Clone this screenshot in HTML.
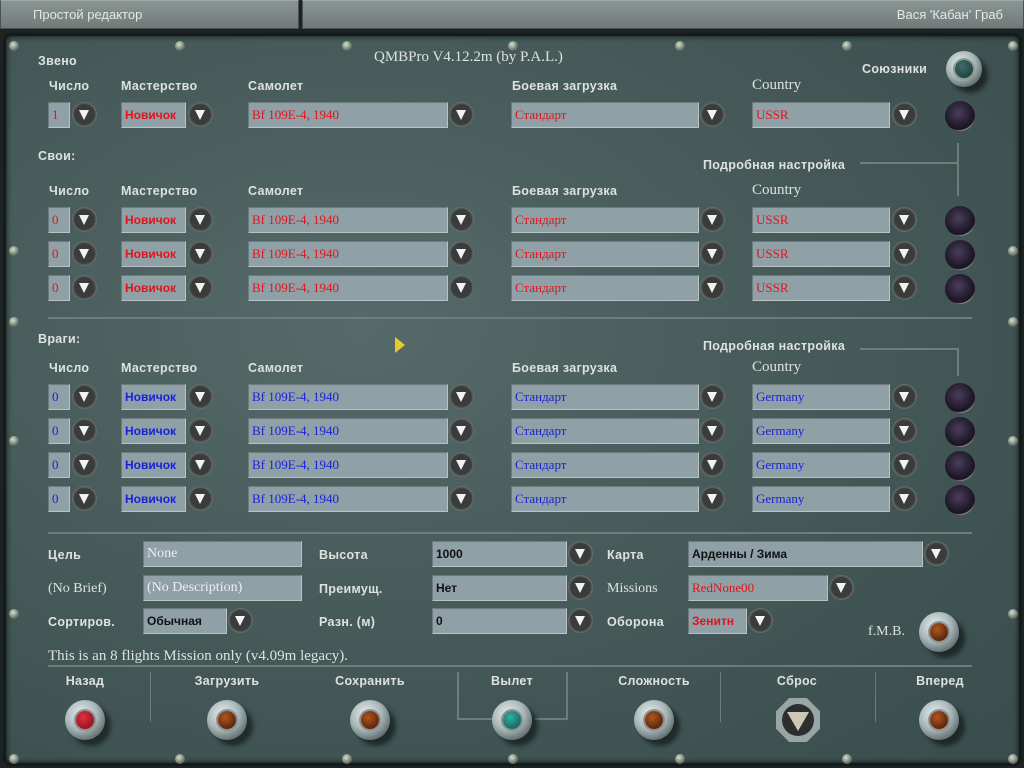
<!DOCTYPE html>
<html><head><meta charset="utf-8"><style>
*{margin:0;padding:0;box-sizing:border-box}
body{width:1024px;height:768px;overflow:hidden;background:#1d2322;position:relative;font-family:"Liberation Serif",serif;}
.tab{position:absolute;top:0;height:29px;background:linear-gradient(#8a9594,#6f7a79);border:1px solid #4a5251;border-top-color:#a0aaa9;color:#e4e8e6;font:13px "Liberation Sans",sans-serif;line-height:28px}
#panel{position:absolute;left:3px;top:33px;width:1019px;height:733px;border-radius:8px;background:radial-gradient(ellipse at 35% 40%,#566a6a 0%,#4a5e5e 35%,#405454 70%,#3a4d4d 100%);border:3px solid #151a1a;box-shadow:inset 0 0 6px #0a0f0f}
.t{position:absolute;color:#dde2de;font-size:14px;white-space:nowrap;line-height:16px}
.s{font-family:"Liberation Sans",sans-serif;font-weight:bold;font-size:12.5px;letter-spacing:.3px}
.f{position:absolute;height:26px;background:#8fa0a7;border:1px solid;border-color:#6d7a7e #b7c3c6 #b7c3c6 #6d7a7e;font:13px "Liberation Serif",serif;line-height:24px;padding-left:3px;white-space:nowrap;overflow:hidden}
.r{color:#e3141a}.b{color:#1a22d8}.k{color:#111;font-family:"Liberation Sans",sans-serif;font-weight:bold;font-size:12px}
.sb{font-family:"Liberation Sans",sans-serif;font-weight:bold;font-size:12px}
.a{position:absolute;width:25px;height:25px;border-radius:50%;background:radial-gradient(circle at 50% 50%,#3a3b3b 55%,#6d7070 70%,#2a2d2d 100%)}
.a:after{content:"";position:absolute;left:7px;top:8px;border-left:5.5px solid transparent;border-right:5.5px solid transparent;border-top:10px solid #f2f2f2}
.d{position:absolute;width:30px;height:30px;border-radius:50%;background:radial-gradient(circle at 45% 40%,#4a3f5a 0%,#221a2c 55%,#1a1420 68%,#a49aa2 74%,#5c5656 88%,#2d3232 100%)}
.sc{position:absolute;width:10px;height:10px;border-radius:50%;background:radial-gradient(circle at 40% 35%,#d8e0d0,#7e8a7c 50%,#2c3430);}
.ln{position:absolute;background:#6e7c7c}
.kn{position:absolute;width:40px;height:40px;border-radius:50%;background:radial-gradient(circle at 40% 35%,#e8eeee,#a9b6b8 45%,#6f7c7e 70%,#34403f 100%);box-shadow:6px 6px 5px rgba(0,0,0,.5)}
.kn i{position:absolute;left:11px;top:11px;width:18px;height:18px;border-radius:50%;box-shadow:0 0 0 2px #8c9090}
</style></head><body>
<div class="tab" style="left:0;width:299px;padding-left:32px">Простой редактор</div>
<div class="tab" style="left:302px;width:722px;text-align:right;padding-right:20px">Вася 'Кабан' Граб</div>
<div id="panel"></div>

<div class="sc" style="left:9px;top:41px"></div><div class="sc" style="left:175px;top:41px"></div><div class="sc" style="left:342px;top:41px"></div><div class="sc" style="left:508px;top:41px"></div><div class="sc" style="left:675px;top:41px"></div><div class="sc" style="left:842px;top:41px"></div><div class="sc" style="left:1008px;top:41px"></div>
<div class="sc" style="left:9px;top:246px"></div><div class="sc" style="left:1008px;top:246px"></div>
<div class="sc" style="left:9px;top:436px"></div><div class="sc" style="left:1008px;top:436px"></div>
<div class="sc" style="left:9px;top:609px"></div><div class="sc" style="left:1008px;top:609px"></div>
<div class="sc" style="left:9px;top:754px"></div><div class="sc" style="left:175px;top:754px"></div><div class="sc" style="left:342px;top:754px"></div><div class="sc" style="left:508px;top:754px"></div><div class="sc" style="left:675px;top:754px"></div><div class="sc" style="left:842px;top:754px"></div><div class="sc" style="left:1008px;top:754px"></div>
<div class="sc" style="left:9px;top:317px"></div><div class="sc" style="left:1008px;top:317px"></div>

<div class="t" style="left:374px;top:49px;font-size:15px">QMBPro V4.12.2m (by P.A.L.)</div>
<div class="t s" style="left:38px;top:53px">Звено</div>
<div class="t s" style="left:862px;top:61px">Союзники</div>
<div class="kn" style="left:946px;top:51px;width:36px;height:36px"><i style="left:9px;top:9px;background:radial-gradient(circle at 40% 35%,#3f6c6a,#173634);box-shadow:0 0 0 2px #8a9a90"></i></div>

<div class="t s" style="left:49px;top:78px">Число</div><div class="t s" style="left:121px;top:78px">Мастерство</div><div class="t s" style="left:248px;top:78px">Самолет</div><div class="t s" style="left:512px;top:78px">Боевая загрузка</div><div class="t" style="left:752px;top:77px;font-size:15px">Country</div>

<div class="t s" style="left:38px;top:148px">Свои:</div>
<div class="t s" style="left:703px;top:157px">Подробная настройка</div>
<div class="ln" style="left:860px;top:162px;width:98px;height:2px"></div>
<div class="ln" style="left:957px;top:143px;width:2px;height:53px"></div>
<div class="t s" style="left:49px;top:183px">Число</div><div class="t s" style="left:121px;top:183px">Мастерство</div><div class="t s" style="left:248px;top:183px">Самолет</div><div class="t s" style="left:512px;top:183px">Боевая загрузка</div><div class="t" style="left:752px;top:182px;font-size:15px">Country</div>

<div class="ln" style="left:48px;top:317px;width:924px;height:2px"></div>
<div class="t s" style="left:38px;top:331px">Враги:</div>
<div class="t s" style="left:703px;top:338px">Подробная настройка</div>
<div class="ln" style="left:860px;top:348px;width:98px;height:2px"></div>
<div class="ln" style="left:957px;top:348px;width:2px;height:28px"></div>
<div class="t s" style="left:49px;top:360px">Число</div><div class="t s" style="left:121px;top:360px">Мастерство</div><div class="t s" style="left:248px;top:360px">Самолет</div><div class="t s" style="left:512px;top:360px">Боевая загрузка</div><div class="t" style="left:752px;top:359px;font-size:15px">Country</div>

<div style="position:absolute;left:395px;top:337px;width:0;height:0;border-top:8px solid transparent;border-bottom:8px solid transparent;border-left:10px solid #e8c830"></div>

<div class="f r" style="left:48px;top:102px;width:22px">1</div><div class="a" style="left:72px;top:102px"></div><div class="f r sb" style="left:121px;top:102px;width:65px">Новичок</div><div class="a" style="left:188px;top:102px"></div><div class="f r" style="left:248px;top:102px;width:200px">Bf 109E-4, 1940</div><div class="a" style="left:449px;top:102px"></div><div class="f r" style="left:511px;top:102px;width:188px">Стандарт</div><div class="a" style="left:700px;top:102px"></div><div class="f r" style="left:752px;top:102px;width:138px">USSR</div><div class="a" style="left:892px;top:102px"></div><div class="d" style="left:945px;top:101px"></div>

<div class="f r" style="left:48px;top:207px;width:22px">0</div><div class="a" style="left:72px;top:207px"></div><div class="f r sb" style="left:121px;top:207px;width:65px">Новичок</div><div class="a" style="left:188px;top:207px"></div><div class="f r" style="left:248px;top:207px;width:200px">Bf 109E-4, 1940</div><div class="a" style="left:449px;top:207px"></div><div class="f r" style="left:511px;top:207px;width:188px">Стандарт</div><div class="a" style="left:700px;top:207px"></div><div class="f r" style="left:752px;top:207px;width:138px">USSR</div><div class="a" style="left:892px;top:207px"></div><div class="d" style="left:945px;top:206px"></div>

<div class="f r" style="left:48px;top:241px;width:22px">0</div><div class="a" style="left:72px;top:241px"></div><div class="f r sb" style="left:121px;top:241px;width:65px">Новичок</div><div class="a" style="left:188px;top:241px"></div><div class="f r" style="left:248px;top:241px;width:200px">Bf 109E-4, 1940</div><div class="a" style="left:449px;top:241px"></div><div class="f r" style="left:511px;top:241px;width:188px">Стандарт</div><div class="a" style="left:700px;top:241px"></div><div class="f r" style="left:752px;top:241px;width:138px">USSR</div><div class="a" style="left:892px;top:241px"></div><div class="d" style="left:945px;top:240px"></div>

<div class="f r" style="left:48px;top:275px;width:22px">0</div><div class="a" style="left:72px;top:275px"></div><div class="f r sb" style="left:121px;top:275px;width:65px">Новичок</div><div class="a" style="left:188px;top:275px"></div><div class="f r" style="left:248px;top:275px;width:200px">Bf 109E-4, 1940</div><div class="a" style="left:449px;top:275px"></div><div class="f r" style="left:511px;top:275px;width:188px">Стандарт</div><div class="a" style="left:700px;top:275px"></div><div class="f r" style="left:752px;top:275px;width:138px">USSR</div><div class="a" style="left:892px;top:275px"></div><div class="d" style="left:945px;top:274px"></div>

<div class="f b" style="left:48px;top:384px;width:22px">0</div><div class="a" style="left:72px;top:384px"></div><div class="f b sb" style="left:121px;top:384px;width:65px">Новичок</div><div class="a" style="left:188px;top:384px"></div><div class="f b" style="left:248px;top:384px;width:200px">Bf 109E-4, 1940</div><div class="a" style="left:449px;top:384px"></div><div class="f b" style="left:511px;top:384px;width:188px">Стандарт</div><div class="a" style="left:700px;top:384px"></div><div class="f b" style="left:752px;top:384px;width:138px">Germany</div><div class="a" style="left:892px;top:384px"></div><div class="d" style="left:945px;top:383px"></div>

<div class="f b" style="left:48px;top:418px;width:22px">0</div><div class="a" style="left:72px;top:418px"></div><div class="f b sb" style="left:121px;top:418px;width:65px">Новичок</div><div class="a" style="left:188px;top:418px"></div><div class="f b" style="left:248px;top:418px;width:200px">Bf 109E-4, 1940</div><div class="a" style="left:449px;top:418px"></div><div class="f b" style="left:511px;top:418px;width:188px">Стандарт</div><div class="a" style="left:700px;top:418px"></div><div class="f b" style="left:752px;top:418px;width:138px">Germany</div><div class="a" style="left:892px;top:418px"></div><div class="d" style="left:945px;top:417px"></div>

<div class="f b" style="left:48px;top:452px;width:22px">0</div><div class="a" style="left:72px;top:452px"></div><div class="f b sb" style="left:121px;top:452px;width:65px">Новичок</div><div class="a" style="left:188px;top:452px"></div><div class="f b" style="left:248px;top:452px;width:200px">Bf 109E-4, 1940</div><div class="a" style="left:449px;top:452px"></div><div class="f b" style="left:511px;top:452px;width:188px">Стандарт</div><div class="a" style="left:700px;top:452px"></div><div class="f b" style="left:752px;top:452px;width:138px">Germany</div><div class="a" style="left:892px;top:452px"></div><div class="d" style="left:945px;top:451px"></div>

<div class="f b" style="left:48px;top:486px;width:22px">0</div><div class="a" style="left:72px;top:486px"></div><div class="f b sb" style="left:121px;top:486px;width:65px">Новичок</div><div class="a" style="left:188px;top:486px"></div><div class="f b" style="left:248px;top:486px;width:200px">Bf 109E-4, 1940</div><div class="a" style="left:449px;top:486px"></div><div class="f b" style="left:511px;top:486px;width:188px">Стандарт</div><div class="a" style="left:700px;top:486px"></div><div class="f b" style="left:752px;top:486px;width:138px">Germany</div><div class="a" style="left:892px;top:486px"></div><div class="d" style="left:945px;top:485px"></div>

<div class="ln" style="left:48px;top:532px;width:924px;height:2px"></div>

<div class="t s" style="left:48px;top:547px">Цель</div>
<div class="f" style="left:143px;top:541px;width:159px;color:#eee;font-size:14px">None</div>
<div class="t s" style="left:319px;top:547px">Высота</div>
<div class="f k" style="left:432px;top:541px;width:135px">1000</div><div class="a" style="left:568px;top:541px"></div>
<div class="t s" style="left:607px;top:547px">Карта</div>
<div class="f k" style="left:688px;top:541px;width:235px">Арденны / Зима</div><div class="a" style="left:924px;top:541px"></div>

<div class="t" style="left:48px;top:581px">(No Brief)</div>
<div class="f" style="left:143px;top:575px;width:159px;color:#eee;font-size:14px">(No Description)</div>
<div class="t s" style="left:319px;top:581px">Преимущ.</div>
<div class="f k" style="left:432px;top:575px;width:135px">Нет</div><div class="a" style="left:568px;top:575px"></div>
<div class="t" style="left:607px;top:581px">Missions</div>
<div class="f r" style="left:688px;top:575px;width:140px">RedNone00</div><div class="a" style="left:829px;top:575px"></div>

<div class="t s" style="left:48px;top:614px">Сортиров.</div>
<div class="f k" style="left:143px;top:608px;width:84px">Обычная</div><div class="a" style="left:228px;top:608px"></div>
<div class="t s" style="left:319px;top:614px">Разн. (м)</div>
<div class="f k" style="left:432px;top:608px;width:135px">0</div><div class="a" style="left:568px;top:608px"></div>
<div class="t s" style="left:607px;top:614px">Оборона</div>
<div class="f r sb" style="left:688px;top:608px;width:59px">Зенитн</div><div class="a" style="left:748px;top:608px"></div>
<div class="t" style="left:868px;top:624px">f.M.B.</div>
<div class="kn" style="left:919px;top:612px"><i style="background:radial-gradient(circle at 40% 35%,#b0561c,#3a1408)"></i></div>

<div class="t" style="left:48px;top:648px;font-size:15px">This is an 8 flights Mission only (v4.09m legacy).</div>
<div class="ln" style="left:48px;top:665px;width:924px;height:2px"></div>

<div class="ln" style="left:150px;top:672px;width:1px;height:50px"></div>
<div class="ln" style="left:457px;top:672px;width:2px;height:47px"></div>
<div class="ln" style="left:566px;top:672px;width:2px;height:47px"></div>
<div class="ln" style="left:457px;top:718px;width:35px;height:2px"></div>
<div class="ln" style="left:535px;top:718px;width:33px;height:2px"></div>
<div class="ln" style="left:720px;top:672px;width:1px;height:50px"></div>
<div class="ln" style="left:875px;top:672px;width:1px;height:50px"></div>

<div class="t s" style="left:45px;top:673px;width:80px;text-align:center">Назад</div>
<div class="t s" style="left:187px;top:673px;width:80px;text-align:center">Загрузить</div>
<div class="t s" style="left:330px;top:673px;width:80px;text-align:center">Сохранить</div>
<div class="t s" style="left:472px;top:673px;width:80px;text-align:center">Вылет</div>
<div class="t s" style="left:614px;top:673px;width:80px;text-align:center">Сложность</div>
<div class="t s" style="left:757px;top:673px;width:80px;text-align:center">Сброс</div>
<div class="t s" style="left:900px;top:673px;width:80px;text-align:center">Вперед</div>

<div class="kn" style="left:65px;top:700px"><i style="background:radial-gradient(circle at 40% 35%,#e03040,#7a0a14)"></i></div>
<div class="kn" style="left:207px;top:700px"><i style="background:radial-gradient(circle at 40% 35%,#b0561c,#3a1408)"></i></div>
<div class="kn" style="left:350px;top:700px"><i style="background:radial-gradient(circle at 40% 35%,#b0561c,#3a1408)"></i></div>
<div class="kn" style="left:492px;top:700px"><i style="background:radial-gradient(circle at 40% 35%,#30b0a0,#0e4e46)"></i></div>
<div class="kn" style="left:634px;top:700px"><i style="background:radial-gradient(circle at 40% 35%,#b0561c,#3a1408)"></i></div>
<div style="position:absolute;left:776px;top:698px;width:44px;height:44px;background:#9aa6a6;clip-path:polygon(30% 0,70% 0,100% 30%,100% 70%,70% 100%,30% 100%,0 70%,0 30%)"></div>
<div style="position:absolute;left:782px;top:704px;width:32px;height:32px;border-radius:50%;background:#2c2f2f"></div>
<div style="position:absolute;left:787px;top:712px;border-left:11px solid transparent;border-right:11px solid transparent;border-top:19px solid #cfc6b4"></div>
<div class="kn" style="left:919px;top:700px"><i style="background:radial-gradient(circle at 40% 35%,#b0561c,#3a1408)"></i></div>
</body></html>
